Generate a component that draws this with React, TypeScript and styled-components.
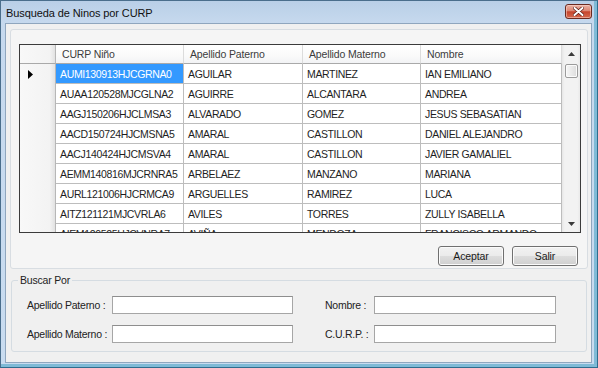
import React from 'react';
import styled, { createGlobalStyle } from 'styled-components';

const GlobalStyle = createGlobalStyle`
  html, body { margin: 0; padding: 0; background: #ffffff; }
  body { font-family: "Liberation Sans", Arial, sans-serif; }
  *, *::before, *::after { box-sizing: border-box; }
`;

const UI_FONT = `"Liberation Sans", Arial, sans-serif`;

const Window = styled.div`
  width: 598px;
  height: 368px;
  display: flex;
  flex-direction: column;
  border: 1px solid #4a6e8c;
  border-right-color: #2f6d8e;
  border-bottom-color: #2f6d8e;
  background: linear-gradient(to bottom, #b9cfe7 0px, #c6d9ee 22px, #c9dcf0 100%);
  box-shadow: inset -3px -3px 0 #7fbad6;
  padding: 0 5px 4px 4px;
`;

const TitleBar = styled.div`
  height: 22px;
  flex: none;
  display: flex;
  justify-content: space-between;
  align-items: flex-start;
  padding-left: 1px;
`;

const TitleText = styled.div`
  font-family: ${UI_FONT};
  font-size: 11px;
  letter-spacing: -0.1px;
  line-height: 14px;
  margin-top: 5px;
  color: #111;
`;

const CloseButton = styled.div`
  width: 27px;
  height: 15px;
  margin-top: 3px;
  border: 1px solid #6b2a20;
  border-radius: 3px;
  background: linear-gradient(to bottom, #eab2a5 0%, #dd8672 45%, #c6442c 52%, #d56a4f 100%);
  box-shadow: inset 0 0 0 1px rgba(255, 220, 210, 0.5);
  display: flex;
  align-items: center;
  justify-content: center;
`;

const Client = styled.div`
  flex: 1;
  display: flex;
  flex-direction: column;
  background: #f0f0f0;
  border: 1px solid #8fa6be;
  padding: 5px 3px 0 4px;
`;

const Panel = styled.div`
  height: 240px;
  flex: none;
  display: flex;
  flex-direction: column;
  border: 1px solid #d8dde2;
  border-radius: 3px;
  background: #f5f5f5;
  padding: 14px 6px 0 8px;
`;

const DataGrid = styled.div`
  width: 562px;
  height: 189px;
  border: 1px solid #3b3b3b;
  background: #ffffff;
  display: flex;
`;

const GridMain = styled.div`
  flex: 1;
  overflow: hidden;
  display: flex;
  flex-direction: column;
`;

const COLUMNS = '36px 128px 119px 118px 141px';

const Row = styled.div<{ $header?: boolean }>`
  display: grid;
  grid-template-columns: ${COLUMNS};
  height: ${(p) => (p.$header ? 19 : 20)}px;
  flex: none;
`;

const HeaderCell = styled.div`
  display: flex;
  align-items: center;
  padding-left: 6px;
  font-family: ${UI_FONT};
  font-size: 10.5px;
  letter-spacing: -0.15px;
  color: #3c3c3c;
  background: linear-gradient(to bottom, #ffffff 0%, #fafafa 60%, #f2f3f5 100%);
  border-right: 1px solid #dcdcdc;
  border-bottom: 1px solid #a9a9a9;
  white-space: nowrap;
  overflow: hidden;
`;

const RowHeader = styled.div<{ $header?: boolean }>`
  display: flex;
  align-items: center;
  padding-left: 8px;
  background: linear-gradient(to right, #f8f8f8 0%, #f3f3f3 85%, #e2e2e2 100%);
  border-right: 1px solid #b7b7b7;
  border-bottom: ${(p) => (p.$header ? '1px solid #a9a9a9' : 'none')};
`;

const Cell = styled.div<{ $selected?: boolean }>`
  display: flex;
  align-items: center;
  padding-left: 4px;
  font-family: ${UI_FONT};
  font-size: 10.5px;
  letter-spacing: -0.35px;
  color: ${(p) => (p.$selected ? '#ffffff' : '#1e1e1e')};
  background: ${(p) => (p.$selected ? '#3399ff' : '#ffffff')};
  border-right: 1px solid #bdbdbd;
  border-bottom: 1px solid #bdbdbd;
  white-space: nowrap;
  overflow: hidden;
`;

const Scrollbar = styled.div`
  width: 18px;
  flex: none;
  display: flex;
  flex-direction: column;
  background: linear-gradient(to right, #e6e6e6 0%, #f2f2f2 15%, #f2f2f2 85%, #e9e9e9 100%);
`;

const ScrollArrow = styled.div`
  height: 17px;
  flex: none;
  display: flex;
  align-items: center;
  justify-content: center;
`;

const ScrollThumb = styled.div`
  height: 14px;
  margin: 2px 2px 0 3px;
  border: 1px solid #9b9b9b;
  border-radius: 2px;
  background: linear-gradient(to right, #f6f6f6 0%, #eaeaea 50%, #dcdcdc 100%);
  box-shadow: inset 0 0 0 1px #fbfbfb;
`;

const ScrollSpacer = styled.div`
  flex: 1;
`;

const ButtonRow = styled.div`
  display: flex;
  justify-content: flex-end;
  gap: 8px;
  margin-top: 13px;
  padding-right: 3px;
`;

const Button = styled.button`
  width: 66px;
  height: 20px;
  padding: 0;
  border: 1px solid #707070;
  border-radius: 3px;
  background: linear-gradient(to bottom, #f2f2f2 0%, #ebebeb 48%, #dddddd 52%, #cfcfcf 100%);
  box-shadow: inset 0 0 0 1px #fbfbfb;
  font-family: ${UI_FONT};
  font-size: 10.5px;
  letter-spacing: -0.1px;
  color: #1a1a1a;
`;

const GroupBox = styled.fieldset`
  margin: 5px 1px 0 1px;
  padding: 0;
  min-width: 0;
  border: 1px solid #d5dce2;
  border-radius: 3px;
`;

const Legend = styled.legend`
  margin-left: 6px;
  padding: 0 2px;
  font-family: ${UI_FONT};
  font-size: 10.5px;
  letter-spacing: -0.2px;
  line-height: 13px;
  color: #222;
`;

const SearchGrid = styled.div`
  display: grid;
  grid-template-columns: 85px 181px 81px 182px;
  row-gap: 11px;
  align-items: center;
  padding: 9px 0 8px 15px;
`;

const Label = styled.label<{ $indent?: number }>`
  padding-left: ${(p) => p.$indent ?? 0}px;
  font-family: ${UI_FONT};
  font-size: 10.5px;
  letter-spacing: -0.25px;
  color: #222;
  white-space: nowrap;
`;

const TextInput = styled.input`
  height: 18px;
  width: 100%;
  margin: 0;
  padding: 0 2px;
  border: 1px solid #a6a6a6;
  border-top-color: #8e8e8e;
  background: #ffffff;
  font-family: ${UI_FONT};
  font-size: 11px;
  outline: none;
`;

const rows: string[][] = [
  ['AUMI130913HJCGRNA0', 'AGUILAR', 'MARTINEZ', 'IAN EMILIANO'],
  ['AUAA120528MJCGLNA2', 'AGUIRRE', 'ALCANTARA', 'ANDREA'],
  ['AAGJ150206HJCLMSA3', 'ALVARADO', 'GOMEZ', 'JESUS SEBASATIAN'],
  ['AACD150724HJCMSNA5', 'AMARAL', 'CASTILLON', 'DANIEL ALEJANDRO'],
  ['AACJ140424HJCMSVA4', 'AMARAL', 'CASTILLON', 'JAVIER GAMALIEL'],
  ['AEMM140816MJCRNRA5', 'ARBELAEZ', 'MANZANO', 'MARIANA'],
  ['AURL121006HJCRMCA9', 'ARGUELLES', 'RAMIREZ', 'LUCA'],
  ['AITZ121121MJCVRLA6', 'AVILES', 'TORRES', 'ZULLY ISABELLA'],
  ['AIEM120525HJCVNRA7', 'AVIÑA', 'MENDOZA', 'FRANCISCO ARMANDO'],
];

const headers = ['CURP Niño', 'Apellido Paterno', 'Apellido Materno', 'Nombre'];

const CurrentRowMark = () => (
  <svg width="5" height="9" viewBox="0 0 5 9">
    <path d="M0 0 L5 4.5 L0 9 Z" fill="#000" />
  </svg>
);

const ArrowUp = () => (
  <svg width="7" height="4" viewBox="0 0 7 4">
    <path d="M0 4 L3.5 0 L7 4 Z" fill="#3a3a3a" />
  </svg>
);

const ArrowDown = () => (
  <svg width="7" height="4" viewBox="0 0 7 4">
    <path d="M0 0 L3.5 4 L7 0 Z" fill="#3a3a3a" />
  </svg>
);

const CloseGlyph = () => (
  <svg width="11" height="9" viewBox="0 0 11 9">
    <path d="M1.5 1 L9.5 8 M9.5 1 L1.5 8" stroke="#5a1a12" strokeWidth="3.4" strokeLinecap="round" />
    <path d="M1.5 1 L9.5 8 M9.5 1 L1.5 8" stroke="#ffffff" strokeWidth="2" strokeLinecap="round" />
  </svg>
);

export default function App() {
  return (
    <>
      <GlobalStyle />
      <Window>
        <TitleBar>
          <TitleText>Busqueda de Ninos por CURP</TitleText>
          <CloseButton>
            <CloseGlyph />
          </CloseButton>
        </TitleBar>
        <Client>
          <Panel>
            <DataGrid>
              <GridMain>
                <Row $header>
                  <RowHeader $header />
                  {headers.map((h) => (
                    <HeaderCell key={h}>{h}</HeaderCell>
                  ))}
                </Row>
                {rows.map((r, i) => (
                  <Row key={r[0]}>
                    <RowHeader>{i === 0 && <CurrentRowMark />}</RowHeader>
                    {r.map((v, j) => (
                      <Cell key={j} $selected={i === 0 && j === 0}>
                        {v}
                      </Cell>
                    ))}
                  </Row>
                ))}
              </GridMain>
              <Scrollbar>
                <ScrollArrow>
                  <ArrowUp />
                </ScrollArrow>
                <ScrollThumb />
                <ScrollSpacer />
                <ScrollArrow>
                  <ArrowDown />
                </ScrollArrow>
              </Scrollbar>
            </DataGrid>
            <ButtonRow>
              <Button>Aceptar</Button>
              <Button>Salir</Button>
            </ButtonRow>
          </Panel>
          <GroupBox>
            <Legend>Buscar Por</Legend>
            <SearchGrid>
              <Label>Apellido Paterno :</Label>
              <TextInput />
              <Label $indent={32}>Nombre :</Label>
              <TextInput />
              <Label>Apellido Materno :</Label>
              <TextInput />
              <Label $indent={32}>C.U.R.P. :</Label>
              <TextInput />
            </SearchGrid>
          </GroupBox>
        </Client>
      </Window>
    </>
  );
}
